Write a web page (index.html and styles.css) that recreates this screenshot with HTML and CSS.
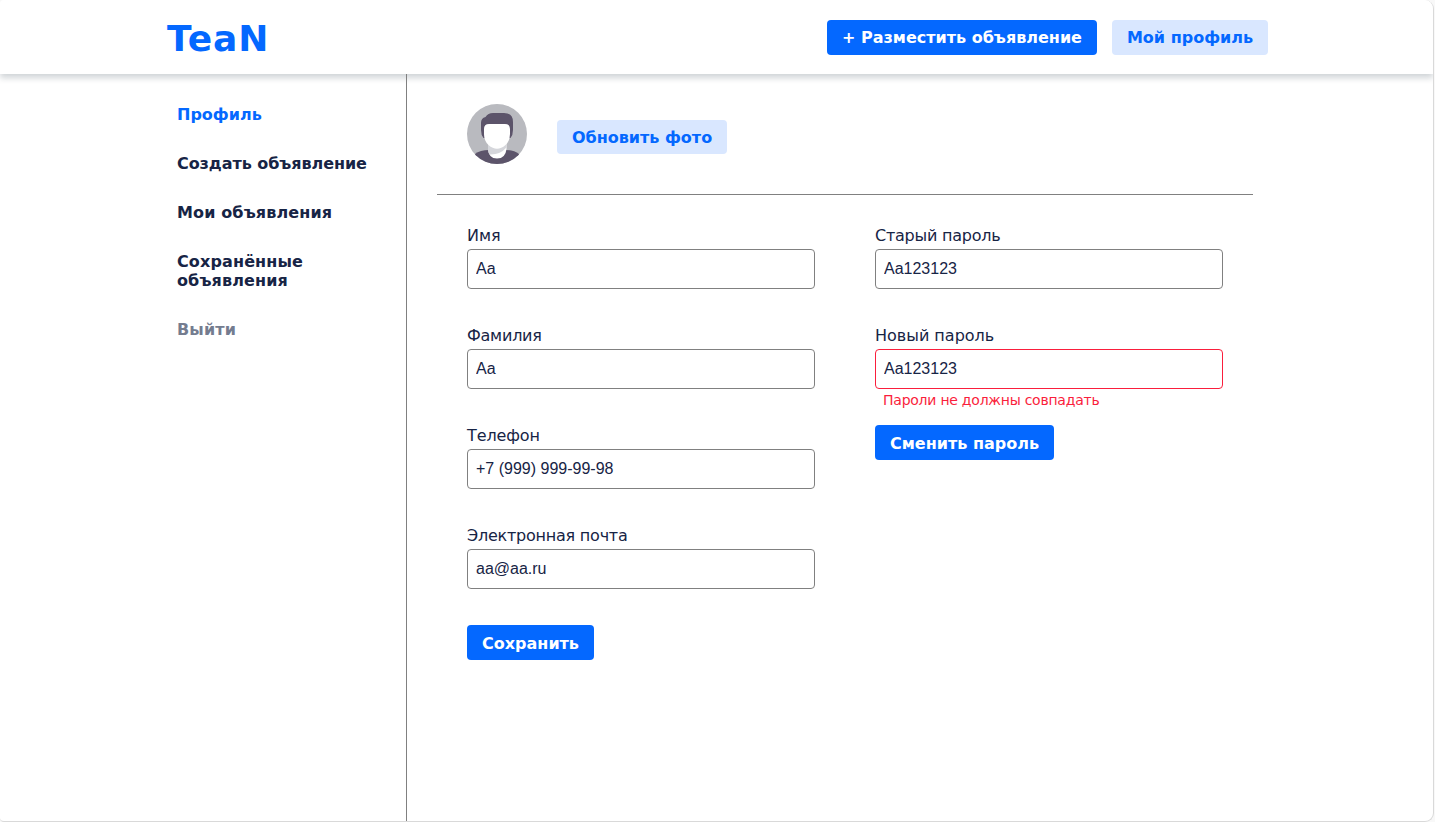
FILE: index.html
```html
<!DOCTYPE html>
<html lang="ru">
<head>
<meta charset="utf-8">
<title>TeaN</title>
<link rel="stylesheet" href="styles.css">
</head>
<body>
<div class="page">
  <header class="header">
    <div class="header-inner">
      <a class="logo">TeaN</a>
      <div class="header-actions">
        <button class="btn btn-primary btn-post">+ Разместить объявление</button>
        <button class="btn btn-light btn-profile">Мой профиль</button>
      </div>
    </div>
  </header>
  <div class="layout">
    <nav class="sidebar">
      <a class="nav-link nav-active">Профиль</a>
      <a class="nav-link nav-create">Создать объявление</a>
      <a class="nav-link nav-wide">Мои объявления</a>
      <a class="nav-link nav-wide">Сохранённые объявления</a>
      <a class="nav-link nav-wide nav-exit">Выйти</a>
    </nav>
    <main class="content">
      <section class="photo">
        <svg class="avatar" viewBox="0 0 60 60">
          <defs><clipPath id="round"><circle cx="30" cy="30" r="30"/></clipPath></defs>
          <g clip-path="url(#round)">
            <rect width="60" height="60" fill="#b9babf"/>
            <path d="M8 50Q13 46 22 46H38Q47 46 52 50V60H8Z" fill="#5c546a"/>
            <path d="M21 38H39.500V45Q38.500 54.500 30 54.500Q21.500 54.500 21 45Z" fill="#fff"/>
            <path d="M21 38H39.500V43.500Q33 51 22.500 50.500Q21 48 21 45Z" fill="#d5d6db"/>
            <path d="M16.500 34Q14 31 14 26V19Q14 14 18.500 13Q21 9 26 9H37Q46 9 46 18V26Q46 31 43.500 34Z" fill="#5c546a"/>
            <path d="M17 25Q17 20 22 20H38Q43 20 43 25V30Q43 37 38.500 41Q30 48.500 21.500 41Q17 37 17 30Z" fill="#fff"/>
          </g>
        </svg>
        <button class="btn btn-light btn-photo">Обновить фото</button>
      </section>
      <div class="forms">
        <form class="form">
          <label class="field"><span class="label">Имя</span><input class="input" value="Aa"></label>
          <label class="field"><span class="label label-tight">Фамилия</span><input class="input" value="Aa"></label>
          <label class="field"><span class="label label-phone">Телефон</span><input class="input" value="+7 (999) 999-99-98"></label>
          <label class="field"><span class="label label-tight">Электронная почта</span><input class="input" value="aa@aa.ru"></label>
          <button class="btn btn-primary btn-submit btn-save" type="button">Сохранить</button>
        </form>
        <form class="form">
          <label class="field"><span class="label label-tight">Старый пароль</span><input class="input" value="Aa123123"></label>
          <label class="field"><span class="label">Новый пароль</span><input class="input input-error" value="Aa123123"><span class="error">Пароли не должны совпадать</span></label>
          <button class="btn btn-primary btn-submit btn-change" type="button">Сменить пароль</button>
        </form>
      </div>
    </main>
  </div>
</div>
</body>
</html>
```
FILE: styles.css
```css
* { box-sizing: border-box; }
body {
  margin: 0;
  background: #f8f8f8;
  color: #172445;
  font: 16px/19px Verdana, "DejaVu Sans", sans-serif;
  overflow: hidden;
}
.page {
  display: flex;
  flex-direction: column;
  width: 1434px;
  height: 822px;
  background: #fff;
  border: solid #d9d9d9;
  border-width: 0 1px 1px 0;
  border-radius: 4px 9px 9px 4px;
  overflow: hidden;
}
.header {
  flex: none;
  height: 74px;
  background: #fff;
  box-shadow: 0 4px 6px rgba(9, 30, 50, .19);
}
.header-inner {
  display: flex;
  align-items: center;
  justify-content: space-between;
  width: 1103px;
  height: 74px;
  margin: 0 auto;
  padding-left: 2px;
}
.logo {
  padding-top: 3px;
  color: #0468ff;
  font-size: 36px;
  font-weight: 700;
  line-height: 44px;
  letter-spacing: .9px;
}
.header-actions { display: flex; gap: 15px; }
.btn {
  height: 35px;
  padding: 1px 0 0;
  border: 0;
  border-radius: 4px;
  font: 700 16px/19px Verdana, "DejaVu Sans", sans-serif;
  white-space: nowrap;
}
.btn-primary { background: #0468ff; color: #fff; }
.btn-light { background: #d9e7ff; color: #0468ff; }
.btn-post { width: 270px; }
.btn-profile { width: 156px; }
.btn-photo { width: 170px; height: 34px; margin-top: 6px; padding: 0; }
.btn-submit { display: block; margin-top: -1px; }
.btn-save { width: 127px; }
.btn-change { width: 179px; }
.layout {
  display: flex;
  flex: 1;
  width: 1101px;
  margin: 0 auto;
}
.sidebar {
  display: flex;
  flex-direction: column;
  gap: 30px;
  width: 241px;
  padding: 31px 30px 0 11px;
  border-right: 1px solid #808080;
}
.nav-link { font-weight: 700; }
.nav-active { color: #0468ff; }
.nav-create { letter-spacing: -.06px; }
.nav-wide { letter-spacing: .13px; }
.nav-exit { color: #747c8f; }
.content { width: 816px; margin-left: 30px; }
.photo {
  display: flex;
  align-items: center;
  gap: 30px;
  height: 121px;
  padding: 0 30px;
  border-bottom: 1px solid #808080;
}
.avatar { width: 60px; height: 60px; }
.forms { display: flex; gap: 60px; padding: 31px 30px 0; }
.form { width: 348px; }
.field { display: block; height: 100px; }
.label { display: block; height: 23px; }
.label-tight { letter-spacing: -.23px; }
.label-phone { letter-spacing: -.12px; }
.input {
  display: block;
  width: 348px;
  height: 40px;
  padding: 0 8px;
  border: 1px solid #808080;
  border-radius: 4px;
  background: #fff;
  color: #172445;
  font: 16px "Liberation Sans", Arial, sans-serif;
}
.input-error { border-color: #fa1e3c; }
.error {
  display: block;
  padding: 2px 8px 0;
  color: #fa1e3c;
  font-size: 14px;
  letter-spacing: -.24px;
}
```
